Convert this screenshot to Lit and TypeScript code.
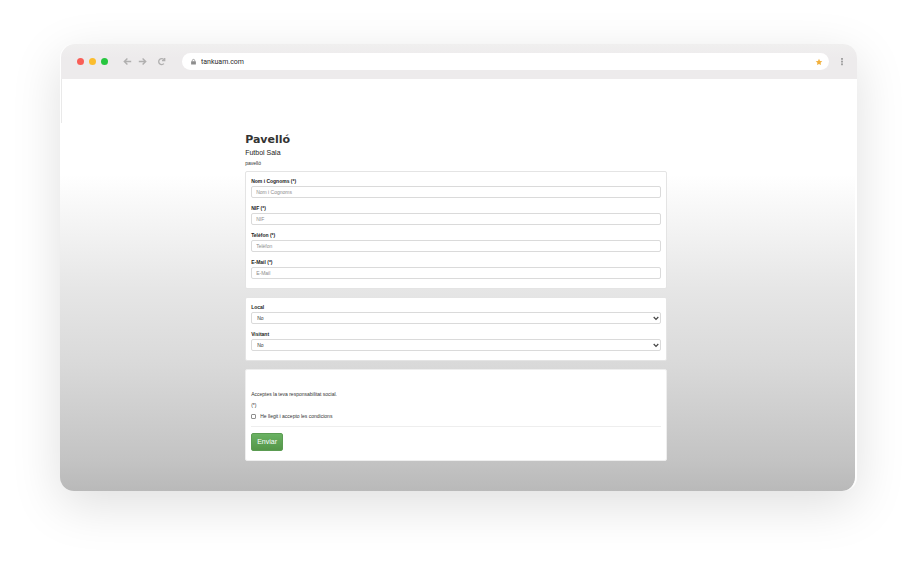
import { LitElement, html, css } from "lit";
import { customElement } from "lit/decorators.js";

const fields = [
  { id: "name", label: "Nom i Cognoms (*)", hint: "Nom i Cognoms", type: "text" },
  { id: "nif", label: "NIF (*)", hint: "NIF", type: "text" },
  { id: "phone", label: "Telèfon (*)", hint: "Telèfon", type: "tel" },
  { id: "email", label: "E-Mail (*)", hint: "E-Mail", type: "email" },
];

const choices = [
  { id: "local", label: "Local" },
  { id: "visitor", label: "Visitant" },
];

@customElement("browser-bar")
export class BrowserBar extends LitElement {
  static styles = css`
    :host {
      display: flex;
      align-items: center;
      box-sizing: border-box;
      height: 35px;
      padding: 0 12px 0 16px;
      background: linear-gradient(#f0efef, #edebec 40%, #edebec);
      border-radius: 14px 14px 0 0;
    }
    .lights {
      display: flex;
      gap: 5px;
      margin-right: 15px;
    }
    .light {
      width: 7px;
      height: 7px;
      border-radius: 50%;
    }
    .red { background: #f95e57; }
    .amber { background: #fbbd2e; }
    .green { background: #27c63f; }
    .tool {
      display: flex;
      padding: 0;
      border: 0;
      background: none;
      color: #b0afaf;
    }
    .nav {
      display: flex;
      gap: 6px;
      margin-right: 10px;
    }
    .reload { margin-right: 16px; }
    svg { display: block; }
    .address {
      flex: 1;
      min-width: 0;
      display: flex;
      align-items: center;
      gap: 4px;
      box-sizing: border-box;
      height: 17px;
      padding: 0 6px 0 8px;
      margin-right: 10px;
      border-radius: 9px;
      background: #fff;
    }
    .url {
      flex: 1;
      min-width: 0;
      padding: 0;
      border: 0;
      outline: 0;
      background: none;
      font: 400 7px/10px Roboto, sans-serif;
      color: #2c2c2c;
    }
  `;

  render() {
    return html`
      <div class="lights">
        <span class="light red"></span>
        <span class="light amber"></span>
        <span class="light green"></span>
      </div>
      <div class="nav">
        <button class="tool" aria-label="Enrere">
          <svg width="9" height="9" viewBox="0 0 9 9" fill="none" stroke="currentColor" stroke-width="1.4">
            <path d="M8.2 4.5H1.4M4.4 1.4L1.3 4.5L4.4 7.6" />
          </svg>
        </button>
        <button class="tool" aria-label="Endavant">
          <svg width="9" height="9" viewBox="0 0 9 9" fill="none" stroke="currentColor" stroke-width="1.4">
            <path d="M.8 4.5H7.6M4.6 1.4L7.7 4.5L4.6 7.6" />
          </svg>
        </button>
      </div>
      <button class="tool reload" aria-label="Recarrega">
        <svg width="9" height="9" viewBox="0 0 9 9" fill="none" stroke="currentColor" stroke-width="1.3">
          <path d="M6.9 6.6A3 3 0 1 1 6.8 2.4L7.4 3.2" />
          <path d="M7.7 1V3.7H5" />
        </svg>
      </button>
      <div class="address">
        <svg width="7" height="7" viewBox="0 0 7 7">
          <path d="M2.3 3.4V2.6A1.2 1.2 0 0 1 4.7 2.6V3.4" fill="none" stroke="#999" stroke-width=".9" />
          <rect x="1.1" y="3.2" width="4.8" height="3.4" rx=".4" fill="#8e8e8e" />
        </svg>
        <input class="url" aria-label="Adreça" value="tankuam.com" />
        <svg width="8" height="8" viewBox="0 0 8 8" fill="#f2b03c">
          <path d="M4 .8L5 2.9L7.3 3.2L5.6 4.8L6 7.1L4 6L2 7.1L2.4 4.8L.7 3.2L3 2.9Z" />
        </svg>
      </div>
      <button class="tool" aria-label="Menú">
        <svg width="6" height="9" viewBox="0 0 6 9" fill="#a2a2a2">
          <rect x="2" y="1" width="2" height="1.8" />
          <rect x="2" y="3.7" width="2" height="1.8" />
          <rect x="2" y="6.4" width="2" height="1.8" />
        </svg>
      </button>
    `;
  }
}

@customElement("booking-form")
export class BookingForm extends LitElement {
  static styles = css`
    :host {
      display: block;
      font: 5px/11px "Liberation Sans", Arial, sans-serif;
      color: #333;
    }
    .title {
      margin: 0;
      font: 700 11px/16px "DejaVu Sans", sans-serif;
      color: #333;
    }
    .subtitle {
      margin: 0;
      font-size: 7px;
      line-height: 10px;
      font-weight: 400;
      color: #222;
    }
    .note {
      margin: 0 0 3px;
      line-height: 10px;
    }
    .form {
      display: flex;
      flex-direction: column;
      gap: 8px;
    }
    .card {
      display: flex;
      flex-direction: column;
      gap: 6px;
      padding: 5px 5px 9px;
      border: 1px solid #e4e4e4;
      border-radius: 2px;
      background: #fff;
    }
    .label {
      display: block;
      line-height: 9px;
      font-weight: 700;
      color: #222;
    }
    .control {
      display: block;
      box-sizing: border-box;
      width: 100%;
      height: 12px;
      margin: 0;
      padding: 0 4px;
      border: 1px solid #dadada;
      border-radius: 2px;
      background: #fff;
      font: inherit;
      line-height: 10px;
      color: #333;
    }
    .control::placeholder { color: #8c8c8c; opacity: 1; }
    .picker { position: relative; }
    .select { appearance: none; padding: 0 5px; }
    .chevron {
      position: absolute;
      right: 2px;
      top: 4px;
      pointer-events: none;
    }
    .terms {
      gap: 0;
      padding-top: 19px;
      border-color: #eee;
    }
    .text { margin: 0; }
    .check {
      display: flex;
      align-items: center;
      gap: 4px;
    }
    .box {
      appearance: none;
      box-sizing: border-box;
      width: 5px;
      height: 5px;
      margin: 0;
      border: 1px solid #8f8f8f;
      border-radius: 1px;
      background: #fff;
    }
    .box:checked { background: #5aa152; }
    .rule {
      width: 100%;
      margin: 4px 0 6px;
      border: 0;
      border-top: 1px solid #eee;
    }
    .send {
      align-self: flex-start;
      height: 18px;
      padding: 0 5px;
      border: 1px solid #5b9c52;
      border-radius: 2px;
      background: linear-gradient(#6ab263, #549648);
      font: 7px/16px "Liberation Sans", Arial, sans-serif;
      color: #fff;
    }
  `;

  render() {
    return html`
      <h1 class="title">Pavelló</h1>
      <h2 class="subtitle">Futbol Sala</h2>
      <p class="note">pavelló</p>
      <form class="form" @submit=${(e: Event) => e.preventDefault()}>
        <div class="card">
          ${fields.map(
            (f) => html`
              <div>
                <label class="label" for=${f.id}>${f.label}</label>
                <input class="control" id=${f.id} type=${f.type} placeholder=${f.hint} />
              </div>
            `,
          )}
        </div>
        <div class="card">
          ${choices.map(
            (c) => html`
              <div>
                <label class="label" for=${c.id}>${c.label}</label>
                <div class="picker">
                  <select class="control select" id=${c.id}>
                    <option>No</option>
                    <option>Sí</option>
                  </select>
                  <svg class="chevron" width="6" height="5" viewBox="0 0 6 5" fill="none" stroke="#444" stroke-width="1.2">
                    <path d="M.7 1L3 3.4L5.3 1" />
                  </svg>
                </div>
              </div>
            `,
          )}
        </div>
        <div class="card terms">
          <p class="text">Acceptes la teva responsabilitat social.</p>
          <p class="text">(*)</p>
          <label class="check"><input class="box" type="checkbox" />He llegit i accepto les condicions</label>
          <hr class="rule" />
          <button class="send" type="submit">Enviar</button>
        </div>
      </form>
    `;
  }
}

@customElement("app-root")
export class AppRoot extends LitElement {
  static styles = css`
    :host {
      display: flex;
      box-sizing: border-box;
      min-height: 100vh;
      padding: 44px 61px 78px 60px;
      background: #fff;
    }
    .window {
      flex: 1;
      min-width: 0;
      display: flex;
      flex-direction: column;
      border-radius: 14px;
      box-shadow: 0 14px 50px rgba(0, 0, 0, 0.13);
    }
    .bar { margin-left: 1px; }
    .strip {
      height: 44px;
      margin: 0 1px;
      border-left: 1px solid #e9e9e9;
      background: #fff;
    }
    .page {
      flex: 1;
      margin-right: 1px;
      padding: 9px 3px 30px 0;
      border-right: 1px solid #fff;
      border-radius: 0 0 14px 14px;
      background: linear-gradient(#fff 14%, #e6e6e6 45%, #d9d9d9 66%, #c3c3c3 92%, #b9b9b9);
    }
    .form {
      width: calc(53% + 2px);
      margin: 0 auto;
    }
  `;

  render() {
    return html`
      <main class="window">
        <browser-bar class="bar"></browser-bar>
        <div class="strip"></div>
        <div class="page"><booking-form class="form"></booking-form></div>
      </main>
    `;
  }
}
